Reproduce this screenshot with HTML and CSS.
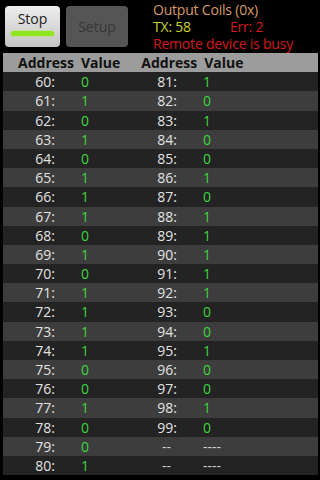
FILE: index.html
```html
<!DOCTYPE html>
<html lang="en">
<head>
	<meta charset="UTF-8">
	<title>Modbus coils</title>
	<link rel="stylesheet" href="styles.css">
</head>
<body>
	<!-- top bar -->
	<div class="top">
		<div class="btns">
			<button class="btn-stop">Stop<span class="led"></span></button>
			<button class="btn-setup">Setup</button>
		</div>
		<div class="status">
			<div class="title">Output Coils (0x)</div>
			<div class="counts"><span class="tx">TX: 58</span><span class="err">Err: 2</span></div>
			<div class="msg">Remote device is busy</div>
		</div>
	</div>

	<!-- table -->
	<div class="grid" id="grid">
		<div class="row head">
			<span class="addr">Address</span><span class="val">Value</span>
			<span class="addr">Address</span><span class="val">Value</span>
		</div>
	</div>

	<script>
	(function(){
		var left = [0,1,0,1,0,1,1,1,0,1,0,1,1,1,1,0,0,1,0,0,1];
		var right = [1,0,1,0,0,1,0,1,1,1,1,1,0,0,1,0,0,1,0];
		var grid = document.getElementById('grid');
		var html = '';
		for(var i=0;i<21;i++){
			var r = i<right.length;
			html += '<div class="row">'+
				'<span class="addr">'+(60+i)+':</span><span class="val">'+left[i]+'</span>'+
				(r ? '<span class="addr">'+(81+i)+':</span><span class="val">'+right[i]+'</span>'
				   : '<span class="addr dash">--</span><span class="val dash">----</span>')+
				'</div>';
		}
		grid.insertAdjacentHTML('beforeend', html);
	})();
	</script>
</body>
</html>
```

FILE: styles.css
```css
*{margin:0;padding:0;box-sizing:border-box;}
body{background:#000;width:320px;height:480px;overflow:hidden;font-family:"Open Sans","Noto Sans","DejaVu Sans",sans-serif;}

/*top*/
.top{display:flex;height:53px;overflow:hidden;}
.btns{display:flex;gap:6px;padding:6px 0 0 5px;width:148px;}
.btns button{font-family:inherit;font-size:14px;border:none;border-radius:4px;height:41px;position:relative;}
.btn-stop{width:55px;background:linear-gradient(#eeeeee,#c4c4c4);color:#222;padding-bottom:17px;}
.btn-stop .led{position:absolute;left:6px;right:6px;top:25px;height:5px;border-radius:3px;background:#8ee61e;box-shadow:0 0 2px #a6f030;}
.btn-setup{width:62px;background:#555;color:#363636;}
.status{padding-left:5px;font-size:14px;line-height:17px;padding-top:1px;letter-spacing:-0.2px;}
.title{color:#d89a64;}
.counts{display:flex;}
.tx{color:#c8d42c;width:77px;}
.err{color:#d21a1a;}
.msg{color:#d21a1a;}

/*table*/
.grid{margin:0 2px 0 3px;font-size:14px;}
.row{display:flex;height:19.2px;line-height:19.2px;background:#232323;color:#e2e2e2;}
.row:nth-child(odd){background:#3d3d3d;}
.row .addr{width:52px;text-align:right;}
.row .val{width:86px;padding-left:26px;color:#3ed63e;}
.row .val + .addr{width:36px;}
.row .dash{color:#cfcfcf;}
.row .addr.dash{padding-right:6px;}
.head{background:#9c9c9c !important;color:#111;font-weight:bold;}
.head .addr{width:auto;padding-left:15px;text-align:left;}
.head .val{color:#111;width:auto;padding-left:7px;}
.head .val + .addr{width:auto;padding-left:21px;}
```
